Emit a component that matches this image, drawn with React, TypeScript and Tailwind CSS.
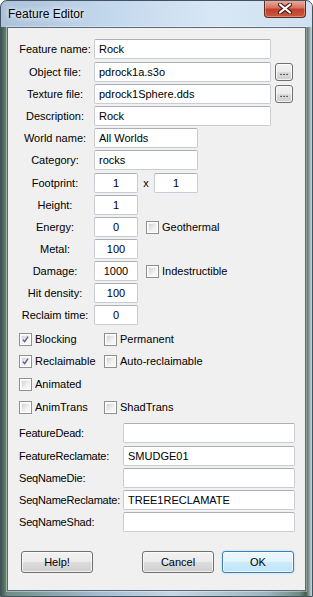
import type { ReactNode } from 'react'

function TextBox({ value = '', w, center = false }: { value?: string; w: string; center?: boolean }) {
  return (
    <div
      className={`${w} h-[20px] shrink-0 rounded-[2px] border border-[#c9cdd3] border-t-[#abb0b8] bg-white flex items-center ${
        center ? 'justify-center' : 'pl-[4px]'
      }`}
    >
      <span className="text-black whitespace-nowrap">{value}</span>
    </div>
  )
}

function CheckBox({ checked = false, label }: { checked?: boolean; label: string }) {
  return (
    <div className="flex items-center h-[20px]">
      <div className="w-[13px] h-[13px] shrink-0 border border-[#8e8f8f] bg-white p-[1px]">
        <div className="w-full h-full border border-[#f4f4f4] bg-[linear-gradient(135deg,#d3d3d3,#f3f3f3_70%,#fafafa)] flex items-center justify-center">
          {checked && (
            <svg width="9" height="9" viewBox="0 0 9 9">
              <path d="M1.2 4.6 L3.4 7.2 L7.8 0.9" fill="none" stroke="#4a5f97" strokeWidth="1.7" />
            </svg>
          )}
        </div>
      </div>
      <span className="ml-[3px] whitespace-nowrap">{label}</span>
    </div>
  )
}

function Button({ children, primary = false, w = 'w-[72px]', h = 'h-[22px]' }: { children: ReactNode; primary?: boolean; w?: string; h?: string }) {
  return (
    <div
      className={`${w} ${h} shrink-0 rounded-[3px] border flex items-center justify-center ${
        primary
          ? 'border-[#3c7fb1] bg-[linear-gradient(to_bottom,#eef8fd_0%,#e1f3fc_50%,#cdebfb_50%,#bde3f8_100%)] shadow-[inset_0_0_0_1px_rgba(255,255,255,0.7),0_0_2px_#8fd3f5]'
          : 'border-[#707070] bg-[linear-gradient(to_bottom,#f2f2f2_0%,#ebebeb_50%,#dddddd_50%,#cfcfcf_100%)] shadow-[inset_0_0_0_1px_rgba(255,255,255,0.7)]'
      }`}
    >
      {children}
    </div>
  )
}

function Row({ label, children, extra = '' }: { label: string; children: ReactNode; extra?: string }) {
  return (
    <div className={`flex items-center h-[20px] ${extra}`}>
      <span className="w-[78px] shrink-0 text-center whitespace-nowrap">{label}</span>
      {children}
    </div>
  )
}

function StrRow({ label, value = '', extra = '' }: { label: string; value?: string; extra?: string }) {
  return (
    <div className={`flex items-center h-[20px] ${extra}`}>
      <span className="w-[104px] shrink-0 whitespace-nowrap tracking-[-0.2px]">{label}</span>
      <TextBox value={value} w="w-[172px]" />
    </div>
  )
}

export default function App() {
  return (
    <div className="w-[313px] h-[597px] flex flex-col rounded-t-[7px] border border-[#44525f] overflow-hidden bg-[linear-gradient(to_right,#3a5944_0%,#6f8d84_2%,#a3bace_30%,#c4d6e7_55%,#9fb6c4_85%,#6e8c7e_96%,#3f5e49_98%,#c9d7e2_100%)] font-['Liberation_Sans',Arial,sans-serif] text-[11px] leading-[13px] text-black">
      {/* title bar */}
      <div className="h-[26px] shrink-0 flex justify-between pl-[7px] pr-[6px] bg-[linear-gradient(to_right,#a9c1da,#c3d8ed_35%,#d9e7f5_70%,#cfe0f0)]">
        <span className="self-center text-[12px] text-black [text-shadow:0_0_8px_#fff,0_0_4px_#fff]">Feature Editor</span>
        <div className="-mt-px w-[42px] h-[18px] rounded-b-[4px] border border-t-0 border-[#5e2a22] bg-[linear-gradient(to_bottom,#eab2a3_0%,#d9735f_45%,#c0402c_55%,#c85a3c_100%)] shadow-[inset_0_0_0_1px_rgba(255,210,200,0.4)] flex items-center justify-center">
          <svg width="14" height="11" viewBox="0 0 14 11">
            <path d="M2 1.5 L12 9.5 M12 1.5 L2 9.5" stroke="#4a1d16" strokeWidth="4.2" strokeLinecap="round" />
            <path d="M2 1.5 L12 9.5 M12 1.5 L2 9.5" stroke="#ffffff" strokeWidth="2.2" strokeLinecap="round" />
          </svg>
        </div>
      </div>

      {/* client area */}
      <div className="flex-1 mx-[6px] mb-[5px] border border-[#5a6a78] bg-[#f0f0f0] flex flex-col shadow-[0_0_0_1px_rgba(255,255,255,0.35)]">
        <div className="pt-[11px] pl-[8px] flex flex-col gap-[2px]">
          <Row label="Feature name:">
            <TextBox value="Rock" w="w-[177px]" />
          </Row>
          <Row label="Object file:" extra="mt-[1px]">
            <TextBox value="pdrock1a.s3o" w="w-[177px]" />
            <div className="ml-[4px]">
              <Button w="w-[18px]" h="h-[18px]">
                <span className="leading-[8px] -mt-[2px]">...</span>
              </Button>
            </div>
          </Row>
          <Row label="Texture file:">
            <TextBox value="pdrock1Sphere.dds" w="w-[177px]" />
            <div className="ml-[4px]">
              <Button w="w-[18px]" h="h-[18px]">
                <span className="leading-[8px] -mt-[2px]">...</span>
              </Button>
            </div>
          </Row>
          <Row label="Description:">
            <TextBox value="Rock" w="w-[177px]" />
          </Row>
          <Row label="World name:">
            <TextBox value="All Worlds" w="w-[104px]" />
          </Row>
          <Row label="Category:">
            <TextBox value="rocks" w="w-[104px]" />
          </Row>
          <Row label="Footprint:" extra="mt-[1px]">
            <TextBox value="1" w="w-[44px]" center />
            <span className="w-[16px] text-center">x</span>
            <TextBox value="1" w="w-[44px]" center />
          </Row>
          <Row label="Height:">
            <TextBox value="1" w="w-[44px]" center />
          </Row>
          <Row label="Energy:">
            <TextBox value="0" w="w-[44px]" center />
            <div className="ml-[8px]">
              <CheckBox label="Geothermal" />
            </div>
          </Row>
          <Row label="Metal:">
            <TextBox value="100" w="w-[44px]" center />
          </Row>
          <Row label="Damage:">
            <TextBox value="1000" w="w-[44px]" center />
            <div className="ml-[8px]">
              <CheckBox label="Indestructible" />
            </div>
          </Row>
          <Row label="Hit density:">
            <TextBox value="100" w="w-[44px]" center />
          </Row>
          <Row label="Reclaim time:">
            <TextBox value="0" w="w-[44px]" center />
          </Row>
        </div>

        {/* flags */}
        <div className="mt-[4px] pl-[11px] flex flex-col">
          <div className="flex">
            <div className="w-[85px]">
              <CheckBox checked label="Blocking" />
            </div>
            <CheckBox label="Permanent" />
          </div>
          <div className="flex mt-[2px]">
            <div className="w-[85px]">
              <CheckBox checked label="Reclaimable" />
            </div>
            <CheckBox label="Auto-reclaimable" />
          </div>
          <div className="flex mt-[3px]">
            <CheckBox label="Animated" />
          </div>
          <div className="flex mt-[3px]">
            <div className="w-[85px]">
              <CheckBox label="AnimTrans" />
            </div>
            <CheckBox label="ShadTrans" />
          </div>
        </div>

        {/* string fields */}
        <div className="mt-[6px] pl-[11px] flex flex-col gap-[2px]">
          <StrRow label="FeatureDead:" />
          <StrRow label="FeatureReclamate:" value="SMUDGE01" extra="mt-[1px]" />
          <StrRow label="SeqNameDie:" />
          <StrRow label="SeqNameReclamate:" value="TREE1RECLAMATE" />
          <StrRow label="SeqNameShad:" />
        </div>

        {/* buttons */}
        <div className="mt-[19px] pl-[13px] flex">
          <Button>Help!</Button>
          <div className="ml-[49px] flex gap-[8px]">
            <Button>Cancel</Button>
            <Button primary>OK</Button>
          </div>
        </div>
      </div>
    </div>
  )
}
